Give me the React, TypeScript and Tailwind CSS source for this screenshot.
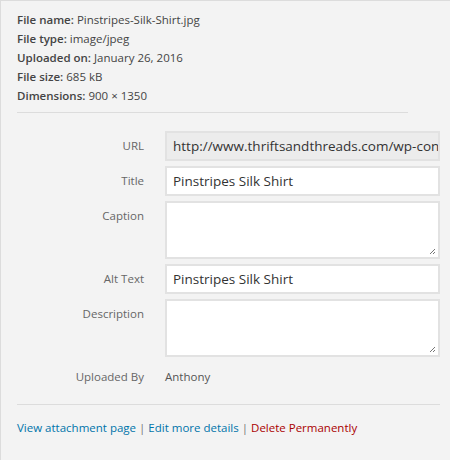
const meta: [string, string][] = [
  ["File name:", "Pinstripes-Silk-Shirt.jpg"],
  ["File type:", "image/jpeg"],
  ["Uploaded on:", "January 26, 2016"],
  ["File size:", "685 kB"],
  ["Dimensions:", "900 × 1350"],
];

function Label({ children }: { children: React.ReactNode }) {
  return <div className="w-[127px] shrink-0 text-right text-[11.5px] text-[#666] pt-[6px]">{children}</div>;
}

function Grip() {
  return (
    <svg className="absolute right-[2px] bottom-[2px]" width="7" height="7" viewBox="0 0 7 7">
      <path d="M1 6 L6 1 M4 6 L6 4" stroke="#777" strokeWidth="1" />
    </svg>
  );
}

export default function App() {
  return (
    <div
      className="w-[450px] h-[460px] bg-[#f3f3f3] border-l border-t border-[#dcdcdc] text-[#444] overflow-hidden"
      style={{ fontFamily: '"Open Sans", sans-serif' }}
    >
      <div className="pl-4 pr-[10px] pt-[9px]">
        {/* file details */}
        <div className="text-[11.5px] leading-[19px]">
          {meta.map(([k, v]) => (
            <div key={k}>
              <span className="font-semibold">{k}</span> {v}
            </div>
          ))}
        </div>
        <div className="h-px bg-[#dcdcdc] mt-[7px] mr-[32px]" />

        {/* fields */}
        <div className="mt-[18px] flex flex-col gap-[5px]">
          <div className="flex gap-[21px]">
            <Label>URL</Label>
            <div className="flex-1 h-[30px] border-2 border-[#e2e2e2] bg-[#ececec] px-[6px] text-[13.5px] leading-[26px] whitespace-nowrap overflow-hidden text-[#333]">
              http://www.thriftsandthreads.com/wp-content/uploads/2016/01/Pinstripes-Silk-Shirt.jpg
            </div>
          </div>
          <div className="flex gap-[21px]">
            <Label>Title</Label>
            <div className="flex-1 h-[30px] border-2 border-[#e2e2e2] bg-white px-[6px] text-[13.5px] leading-[26px] text-[#333]">
              Pinstripes Silk Shirt
            </div>
          </div>
          <div className="flex gap-[21px]">
            <Label>Caption</Label>
            <div className="relative flex-1 h-[58px] border-2 border-[#e2e2e2] bg-white">
              <Grip />
            </div>
          </div>
          <div className="flex gap-[21px]">
            <Label>Alt Text</Label>
            <div className="flex-1 h-[30px] border-2 border-[#e2e2e2] bg-white px-[6px] text-[13.5px] leading-[26px] text-[#333]">
              Pinstripes Silk Shirt
            </div>
          </div>
          <div className="flex gap-[21px]">
            <Label>Description</Label>
            <div className="relative flex-1 h-[58px] border-2 border-[#e2e2e2] bg-white">
              <Grip />
            </div>
          </div>
          <div className="flex gap-[21px]">
            <Label>Uploaded By</Label>
            <div className="text-[11.5px] pt-[6px] text-[#555]">Anthony</div>
          </div>
        </div>

        <div className="h-px bg-[#dcdcdc] mt-[19px]" />

        <div className="mt-[14px] text-[11.5px]">
          <span className="text-[#0073aa]">View attachment page</span>
          <span className="text-[#777]"> | </span>
          <span className="text-[#0073aa]">Edit more details</span>
          <span className="text-[#777]"> | </span>
          <span className="text-[#a00]">Delete Permanently</span>
        </div>
      </div>
    </div>
  );
}
